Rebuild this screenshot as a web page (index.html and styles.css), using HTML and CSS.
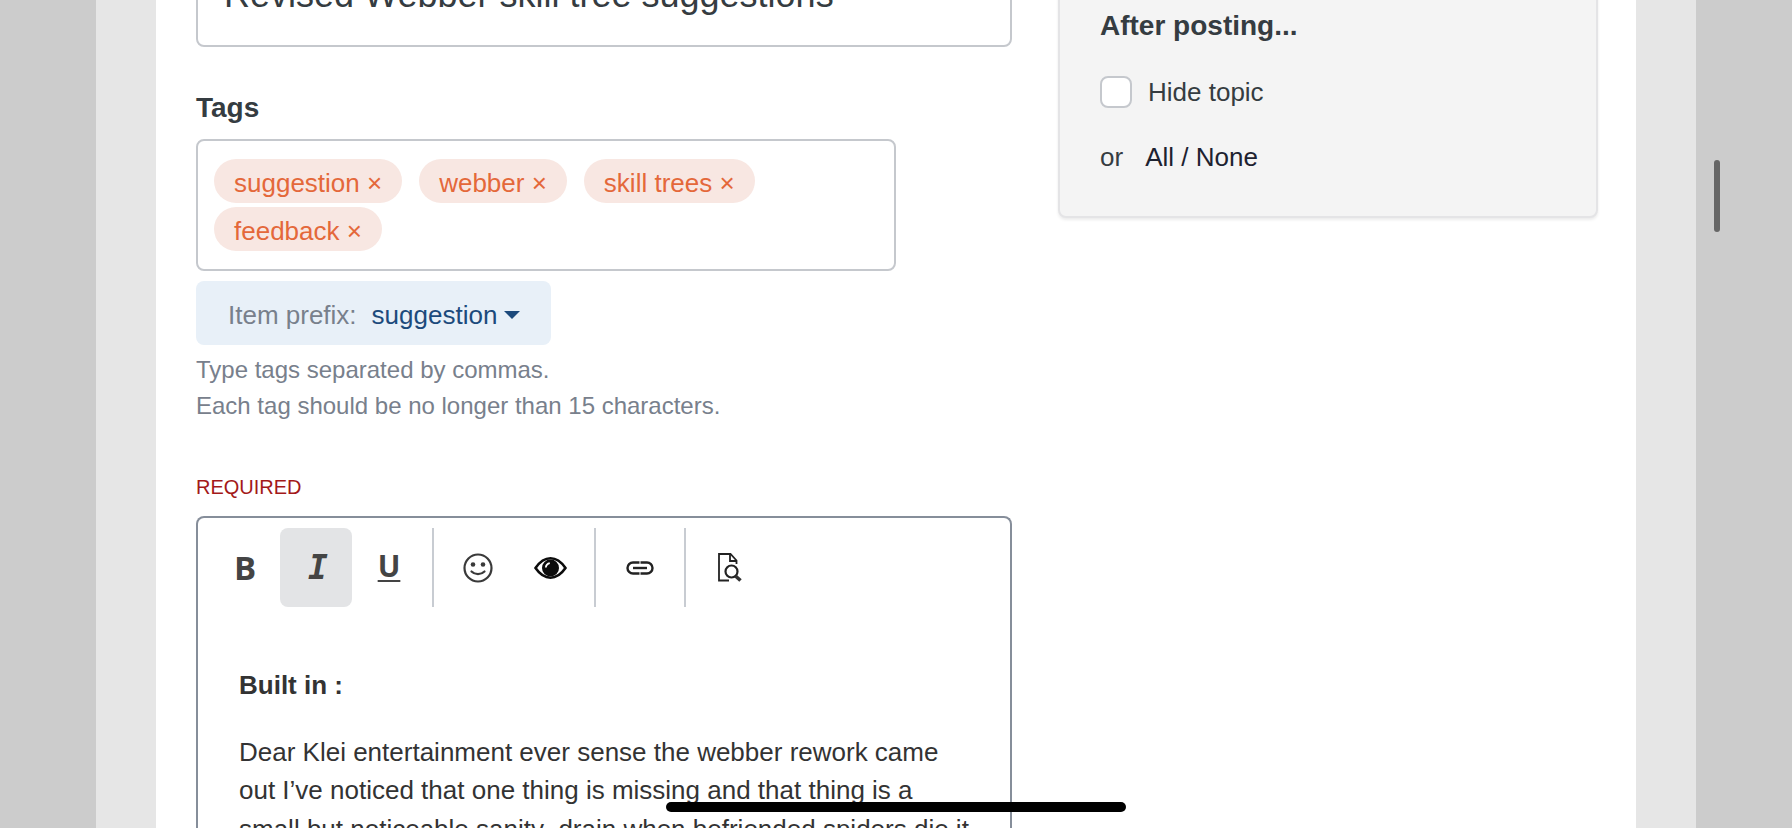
FILE: index.html
```html
<!DOCTYPE html>
<html lang="en">
<head>
  <meta charset="UTF-8">
  <title>Create topic</title>
  <link rel="stylesheet" href="styles.css">
</head>
<body>
<div class="frame">
  <div class="page">
    <div class="columns">
      <main class="form">
        <div class="title-input">Revised Webber skill tree suggestions</div>

        <label class="field-label">Tags</label>
        <div class="tag-box">
          <span class="tag">suggestion <i class="tag-x">×</i></span>
          <span class="tag">webber <i class="tag-x">×</i></span>
          <span class="tag">skill trees <i class="tag-x">×</i></span>
          <span class="tag">feedback <i class="tag-x">×</i></span>
        </div>
        <div class="prefix">
          <span class="prefix-label">Item prefix:</span>
          <span class="prefix-value">suggestion</span>
          <span class="caret"></span>
        </div>
        <p class="help">Type tags separated by commas.<br>Each tag should be no longer than 15 characters.</p>

        <div class="required">REQUIRED</div>
        <div class="editor">
          <div class="toolbar">
            <button class="tool tool-b">B</button>
            <button class="tool tool-i active">I</button>
            <button class="tool tool-u">U</button>
            <span class="sep"></span>
            <button class="tool">
              <svg width="30" height="30" viewBox="0 0 30 30" fill="none" stroke="#3a3a3a" stroke-width="2.200">
                <circle cx="15" cy="15" r="13.500"/>
                <circle cx="10" cy="11.500" r="2.300" fill="#3a3a3a" stroke="none"/>
                <circle cx="20" cy="11.500" r="2.300" fill="#3a3a3a" stroke="none"/>
                <path d="M8.500 18.500c3.500 3.500 9.500 3.500 13 0" stroke-linecap="round"/>
              </svg>
            </button>
            <button class="tool">
              <svg width="33" height="22" viewBox="0 0 33 22">
                <path d="M1.500 11C6 4.500 11 1.300 16.500 1.300S27 4.500 31.500 11C27 17.500 22 20.700 16.500 20.700S6 17.500 1.500 11z" fill="none" stroke="#0c0c0c" stroke-width="2.600"/>
                <circle cx="16.500" cy="11" r="8.500" fill="#0c0c0c"/>
                <path d="M11.800 10.500c.3-2.300 1.700-3.900 4-4.300" fill="none" stroke="#fff" stroke-width="1.800"/>
              </svg>
            </button>
            <span class="sep"></span>
            <button class="tool">
              <svg width="28" height="14" viewBox="0 0 28 14" fill="none" stroke="#222" stroke-width="2.400">
                <path d="M13.500 1.500H7a5.500 5.500 0 000 11h6.500"/>
                <path d="M14.500 1.500H21a5.500 5.500 0 010 11h-6.500"/>
                <path d="M7 7h14"/>
              </svg>
            </button>
            <span class="sep"></span>
            <button class="tool">
              <svg width="24" height="29" viewBox="0 0 24 29" fill="none" stroke="#222" stroke-width="1.800">
                <path d="M18.500 11V7.500L12.500 1H1v26.500h10"/>
                <path d="M12 1.500V8h6"/>
                <circle cx="13.500" cy="18.500" r="6" stroke-width="2.200"/>
                <path d="M17.500 23l5 4.500" stroke-width="3.600" stroke="#333"/>
              </svg>
            </button>
          </div>
          <div class="editor-body">
            <p><strong>Built in :</strong></p>
            <p>Dear Klei entertainment ever sense the webber rework came out I’ve noticed that one thing is missing and that thing is a small but noticeable sanity&nbsp; drain when befriended spiders die it</p>
          </div>
        </div>
      </main>

      <aside class="side">
        <div class="panel">
          <h3 class="panel-title">After posting...</h3>
          <div class="check-row">
            <span class="checkbox"></span>
            <span>Hide topic</span>
          </div>
          <div class="or-row">
            <span>or</span>
            <span class="all-none">All / None</span>
          </div>
        </div>
      </aside>
    </div>
  </div>
</div>

<!-- ipad scroll thumb + home bar, both sit over the page -->
<div class="scroll-thumb"></div>
<div class="home-bar"></div>
</body>
</html>
```

FILE: styles.css
```css
* {
  box-sizing: border-box;
}

html, body {
  height: 828px;
  overflow: hidden;
}

body {
  margin: 0;
  padding: 0 96px;
  background: #ccc;
  font-family: 'Liberation Sans', Arial, sans-serif;
  font-size: 26px;
  color: #353c41;
}

.frame {
  height: 828px;
  padding: 0 60px;
  background: #e6e6e6;
}

.page {
  height: 828px;
  padding: 0 38px 0 40px;
  overflow: hidden;
  background: #fff;
}

.columns {
  display: grid;
  grid-template-columns: 816px 540px;
  gap: 46px;
  align-items: start;
}

.title-input {
  height: 87px;
  margin-top: -40px;
  padding: 15px 26px;
  border: 2px solid #c5c8cd;
  border-radius: 8px;
  font-size: 36px;
  line-height: 36px;
}

.field-label {
  display: block;
  margin-top: 45px;
  margin-bottom: 15px;
  font-size: 28px;
  line-height: 32px;
  font-weight: bold;
}

.tag-box {
  display: flex;
  flex-wrap: wrap;
  gap: 4px 17px;
  width: 700px;
  height: 132px;
  padding: 18px 16px;
  border: 2px solid #c5c8cd;
  border-radius: 8px;
}

.tag {
  height: 44px;
  padding: 2px 20px 0;
  border-radius: 22px;
  background: #f8e7e2;
  color: #e4683a;
  line-height: 44px;
}

.tag-x {
  font-style: normal;
}

.prefix {
  display: flex;
  align-items: center;
  width: 355px;
  height: 64px;
  margin-top: 10px;
  padding: 4px 0 0 32px;
  border-radius: 8px;
  background: #e8f0f8;
}

.prefix-label {
  color: #78808c;
}

.prefix-value {
  margin-left: 15px;
  color: #1c4a7c;
}

.caret {
  margin-left: 7px;
  border-left: 8px solid transparent;
  border-right: 8px solid transparent;
  border-top: 8px solid #1c4a7c;
}

.help {
  margin: 7px 0 0;
  font-size: 24px;
  line-height: 36px;
  color: #78808c;
}

.required {
  margin-top: 51px;
  font-size: 20px;
  line-height: 24px;
  color: #a31919;
}

.editor {
  margin-top: 17px;
  height: 400px;
  border: 2px solid #868e9a;
  border-bottom: 0;
  border-radius: 8px 8px 0 0;
}

.toolbar {
  display: flex;
  height: 90px;
  padding: 10px 10px 0;
}

.tool {
  display: flex;
  align-items: center;
  justify-content: center;
  width: 72px;
  height: 79px;
  padding: 0;
  border: 0;
  border-radius: 8px;
  background: none;
  color: #444;
}

.tool.active {
  background: #e3e4e6;
}

.tool-b {
  padding-left: 2px;
  font-family: 'Open Sans', sans-serif;
  font-size: 33px;
  font-weight: bold;
}

.tool-i {
  padding-left: 4px;
  font-family: 'DejaVu Sans Mono', monospace;
  font-size: 33px;
  font-weight: bold;
  font-style: italic;
}

.tool-u {
  padding: 0 0 5px 2px;
  font-family: 'Open Sans', sans-serif;
  font-size: 30px;
  font-weight: bold;
  text-decoration: underline;
  text-decoration-thickness: 2px;
  text-underline-offset: 3px;
}

.sep {
  width: 2px;
  height: 79px;
  margin: 0 8px;
  background: #c8ccd2;
}

.editor-body {
  padding: 58px 40px 0 41px;
  line-height: 38.500px;
  color: #333;
}

.editor-body p {
  margin: 0 0 28px;
}

.panel {
  height: 258px;
  margin-top: -40px;
  padding: 48px 40px 0 40px;
  border: 2px solid #e4e4e6;
  border-radius: 8px;
  background: #f4f4f4;
  box-shadow: 0 2px 3px rgba(0, 0, 0, 0.08);
}

.panel-title {
  margin: 0;
  font-size: 28px;
  line-height: 32px;
  font-weight: bold;
}

.check-row {
  display: flex;
  align-items: center;
  gap: 16px;
  margin-top: 34px;
}

.checkbox {
  width: 32px;
  height: 32px;
  border: 2px solid #c5c8cd;
  border-radius: 8px;
  background: #fff;
}

.or-row {
  display: flex;
  gap: 22px;
  margin-top: 34px;
}

.all-none {
  color: #1d2230;
}

.scroll-thumb {
  position: absolute;
  left: 1714px;
  top: 160px;
  width: 6px;
  height: 72px;
  border-radius: 3px;
  background: #666;
}

.home-bar {
  position: absolute;
  left: 666px;
  top: 802px;
  width: 460px;
  height: 10px;
  border-radius: 5px;
  background: #000;
}
```
